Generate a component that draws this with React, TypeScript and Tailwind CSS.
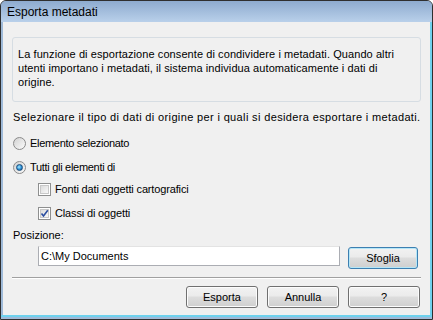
import React from 'react'

const font = "font-['Tahoma','Liberation_Sans',sans-serif]"

function Radio({ checked }: { checked?: boolean }) {
  return (
    <span className="relative flex h-[13px] w-[13px] shrink-0 items-center justify-center rounded-full border border-[#8a8a8a] bg-[linear-gradient(135deg,#d2d2d2,#fbfbfb)]">
      {checked && (
        <span className="h-[7px] w-[7px] rounded-full border border-[#1b4f7e] bg-[radial-gradient(circle_at_40%_40%,#a8ecff,#2d8fd6_55%,#0d4478)]" />
      )}
    </span>
  )
}

function Checkbox({ checked }: { checked?: boolean }) {
  return (
    <span className="relative flex h-[13px] w-[13px] shrink-0 items-center justify-center border border-[#8e8f8f] bg-white">
      <span className="h-[9px] w-[9px] border border-[#c8c8c8] bg-[linear-gradient(135deg,#dcdcdc,#f8f8f8)]" />
      {checked && (
        <svg className="absolute left-[1px] top-[1px]" width="9" height="9" viewBox="0 0 9 9">
          <path d="M1.5 4.5 L3.5 7 L7.8 1.2" fill="none" stroke="#2a4da0" strokeWidth="1.6" />
        </svg>
      )}
    </span>
  )
}

function Button({ children, focused, w = 'w-[72px]' }: { children: React.ReactNode; focused?: boolean; w?: string }) {
  return (
    <button
      className={
        focused
          ? `${w} h-[22px] rounded-[3px] border border-[#3c7fb1] bg-[linear-gradient(#f2f2f2_0%,#ebebeb_45%,#dddddd_50%,#cfcfcf_100%)] text-[11px] text-black shadow-[inset_0_0_0_1px_#b5e6f7]`
          : `${w} h-[22px] rounded-[3px] border border-[#707070] bg-[linear-gradient(#f2f2f2_0%,#ebebeb_45%,#dddddd_50%,#cfcfcf_100%)] text-[11px] text-black shadow-[inset_0_0_0_1px_#fcfcfc]`
      }
    >
      {children}
    </button>
  )
}

export default function App() {
  return (
    <div className={`${font} h-[320px] w-[433px] overflow-hidden rounded-t-[6px] border border-[#2f2f2f] bg-[#9fbad8] text-[11px] text-black`}>
      <div className="flex h-[21px] items-center bg-[linear-gradient(#8eabcf,#b9d0ea)] pl-[6px] font-['Liberation_Sans',sans-serif] text-[12px] leading-none">
        Esporta metadati
      </div>
      <div className="flex h-[295px] flex-col border-r-2 border-b-2 border-r-[#6fd2ee] border-b-[#6fd2ee] bg-[#9fbad8] pl-[2px]">
        <div className="flex flex-1 flex-col bg-[#f0f0f0] px-[9px] pt-[15px]">
          <div className="h-[65px] rounded-[3px] border border-[#d6dde3] pl-[5px] pr-[16px] pt-[9px] leading-[14px] tracking-[0.08px]">
            La funzione di esportazione consente di condividere i metadati. Quando altri utenti importano i metadati, il sistema individua automaticamente i dati di origine.
          </div>
          <div className="mt-[8px] whitespace-nowrap pl-[1px] leading-[14px] tracking-[0.36px]">
            Selezionare il tipo di dati di origine per i quali si desidera esportare i metadati.
          </div>
          <div className="mt-[12px] flex items-center gap-[4px] pl-[1px] leading-[14px] tracking-[-0.3px]">
            <Radio />
            <span>Elemento selezionato</span>
          </div>
          <div className="mt-[10px] flex items-center gap-[4px] pl-[1px] leading-[14px] tracking-[-0.3px]">
            <Radio checked />
            <span>Tutti gli elementi di</span>
          </div>
          <div className="mt-[8px] flex items-center gap-[4px] pl-[26px] leading-[14px] tracking-[-0.15px]">
            <Checkbox />
            <span>Fonti dati oggetti cartografici</span>
          </div>
          <div className="mt-[10px] flex items-center gap-[4px] pl-[26px] leading-[14px] tracking-[-0.15px]">
            <Checkbox checked />
            <span>Classi di oggetti</span>
          </div>
          <div className="mt-[8px] pl-[1px] leading-[14px]">Posizione:</div>
          <div className="mt-[4px] flex items-start pl-[26px]">
            <div className="flex h-[20px] w-[302px] items-center border border-[#abadb3] border-t-[#e3e3e3] bg-white pl-[2px]">
              C:\My Documents
            </div>
            <div className="ml-[8px] mt-[1px]">
              <Button focused w="w-[70px]">Sfoglia</Button>
            </div>
          </div>
          <div className="mt-[8px] h-[2px] border-t border-b border-t-[#a0a0a0] border-b-white" />
          <div className="mt-[7px] flex justify-end gap-[9px] pr-[1px]">
            <Button>Esporta</Button>
            <Button>Annulla</Button>
            <Button>?</Button>
          </div>
        </div>
      </div>
    </div>
  )
}
